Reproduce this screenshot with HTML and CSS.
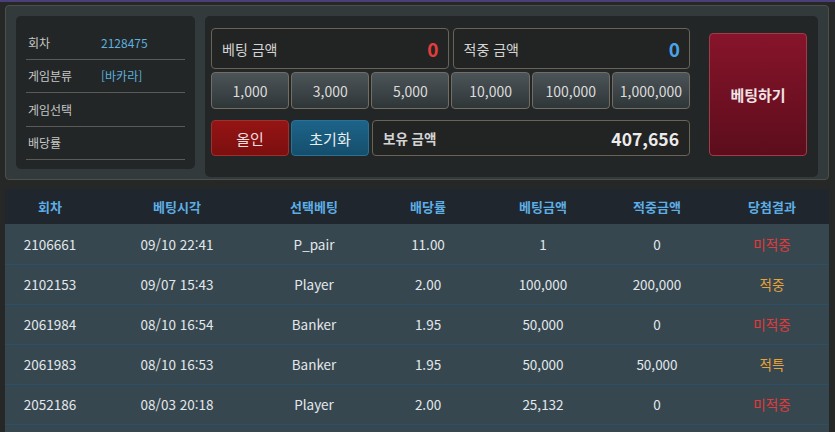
FILE: index.html
```html
<!DOCTYPE html>
<html lang="ko">
<head>
<meta charset="utf-8">
<link rel="stylesheet" href="styles.css">
</head>
<body>
<div class="topline"></div>
<div class="wrap">
  <div class="panel">
    <div class="info">
      <div class="info-row"><span class="lbl">회차</span><span class="val">2128475</span></div>
      <div class="info-row"><span class="lbl">게임분류</span><span class="val">[바카라]</span></div>
      <div class="info-row"><span class="lbl">게임선택</span><span class="val"></span></div>
      <div class="info-row"><span class="lbl">배당률</span><span class="val"></span></div>
    </div>
    <div class="bet">
      <div class="bet-left">
        <div class="amounts">
          <div class="box"><span class="box-lbl">베팅 금액</span><span class="num red">0</span></div>
          <div class="box"><span class="box-lbl">적중 금액</span><span class="num blue">0</span></div>
        </div>
        <div class="chips">
          <button class="chip">1,000</button>
          <button class="chip">3,000</button>
          <button class="chip">5,000</button>
          <button class="chip">10,000</button>
          <button class="chip">100,000</button>
          <button class="chip">1,000,000</button>
        </div>
        <div class="actions">
          <button class="act allin">올인</button>
          <button class="act reset">초기화</button>
          <div class="box hold"><span class="box-lbl b">보유 금액</span><span class="num white">407,656</span></div>
        </div>
      </div>
      <button class="go">베팅하기</button>
    </div>
  </div>
  <table class="hist">
    <colgroup>
      <col class="c1"><col class="c2"><col class="c3"><col class="c4"><col class="c5"><col class="c6"><col class="c7">
    </colgroup>
    <thead>
      <tr><th>회차</th><th>베팅시각</th><th>선택베팅</th><th>배당률</th><th>베팅금액</th><th>적중금액</th><th>당첨결과</th></tr>
    </thead>
    <tbody>
      <tr><td>2106661</td><td>09/10 22:41</td><td>P_pair</td><td>11.00</td><td>1</td><td>0</td><td class="lose">미적중</td></tr>
      <tr><td>2102153</td><td>09/07 15:43</td><td>Player</td><td>2.00</td><td>100,000</td><td>200,000</td><td class="win">적중</td></tr>
      <tr><td>2061984</td><td>08/10 16:54</td><td>Banker</td><td>1.95</td><td>50,000</td><td>0</td><td class="lose">미적중</td></tr>
      <tr><td>2061983</td><td>08/10 16:53</td><td>Banker</td><td>1.95</td><td>50,000</td><td>50,000</td><td class="win">적특</td></tr>
      <tr><td>2052186</td><td>08/03 20:18</td><td>Player</td><td>2.00</td><td>25,132</td><td>0</td><td class="lose">미적중</td></tr>
      <tr><td></td><td></td><td></td><td></td><td></td><td></td><td></td></tr>
    </tbody>
  </table>
</div>
</body>
</html>
```
FILE: styles.css
```css
* { box-sizing: border-box; }
html, body {
  margin: 0;
  padding: 0;
  background: #262828;
  font-family: "Noto Sans CJK KR", "Noto Sans", sans-serif;
  color: #d8d8d8;
  overflow: hidden;
  height: 432px;
}
.topline {
  height: 2px;
  background: #4a3f78;
}
.wrap {
  padding: 3px 6px 0 5px;
}
.panel {
  display: flex;
  align-items: flex-start;
  gap: 10px;
  background: #323a3b;
  border: 1px solid #4e4e4b;
  border-radius: 4px;
  padding: 10px 10px 1px 10px;
  height: 175px;
}
.info {
  width: 179px;
  height: 153px;
  background: #222627;
  border-radius: 5px;
  padding: 10px 10px 0 10px;
}
.info-row {
  display: flex;
  align-items: center;
  height: 33.5px;
  border-bottom: 1.5px solid #5a5a58;
  font-size: 12px;
}
.lbl {
  width: 75px;
  padding-left: 2px;
  color: #c6c6c6;
}
.val {
  color: #5fb0dc;
}
.bet {
  flex: 1;
  height: 161px;
  background: #222627;
  border-radius: 5px;
  padding: 12px 11px 0 6px;
  display: flex;
  align-items: flex-start;
  gap: 19px;
}
.bet-left {
  width: 479px;
  display: flex;
  flex-direction: column;
}
.amounts {
  display: flex;
  gap: 4px;
  height: 41px;
}
.box {
  flex: 1;
  display: flex;
  align-items: center;
  justify-content: space-between;
  border: 1px solid #6a6357;
  border-radius: 4px;
  background: #222424;
  padding: 0 9px 0 10px;
}
.box-lbl {
  font-size: 14px;
  color: #d4d4d4;
}
.box-lbl.b {
  font-weight: bold;
  font-size: 13.5px;
}
.num {
  font-size: 19px;
  font-weight: bold;
}
.num.white {
  font-size: 17.5px;
}
.red { color: #e43d3d; }
.blue { color: #4aa3ea; }
.white { color: #ececec; }
.chips {
  display: grid;
  grid-template-columns: repeat(6, 1fr);
  gap: 2px;
  margin-top: 3px;
  height: 37px;
}
.chip, .act {
  font-family: inherit;
  font-size: 14px;
  color: #dcdcdc;
  border: 1px solid #736d63;
  border-radius: 4px;
  background: linear-gradient(#4b5458, #2f3638);
  padding: 0;
  cursor: pointer;
}
.actions {
  display: flex;
  gap: 2px;
  margin-top: 11px;
  height: 36px;
}
.act {
  width: 78px;
  font-size: 15px;
}
.allin {
  background: linear-gradient(#951414, #7c0f0f);
  border-color: #a03030;
  color: #f0dede;
}
.reset {
  background: linear-gradient(#1d6489, #154e6c);
  border-color: #2a7198;
  color: #e6eef2;
}
.hold {
  margin-left: 1px;
  padding-right: 10px;
}
.go {
  margin-top: 5px;
  width: 98px;
  height: 123px;
  font-family: inherit;
  font-size: 15px;
  font-weight: bold;
  color: #f2e4e6;
  background: linear-gradient(#87142a, #5c0d1c);
  border: 1px solid #a23a48;
  border-radius: 4px;
  padding: 0;
}
.hist {
  margin-top: 9px;
  width: 824px;
  border-collapse: collapse;
  table-layout: fixed;
}
.c1 { width: 90px; }
.c2 { width: 164px; }
.c3 { width: 110px; }
.c4 { width: 118px; }
.c5 { width: 112px; }
.c6 { width: 116px; }
.c7 { width: 114px; }
.hist thead tr {
  background: #1f262d;
}
.hist th {
  height: 35px;
  font-size: 13px;
  font-weight: bold;
  color: #5eaee6;
  text-align: center;
  padding: 0;
}
.hist td {
  height: 40px;
  background: #37474f;
  border-bottom: 1px solid #2b5168;
  font-size: 13.5px;
  color: #e2e8ec;
  text-align: center;
  padding: 0;
}
.hist td.lose { color: #e43a3a; }
.hist td.win { color: #e8a33a; }
```
